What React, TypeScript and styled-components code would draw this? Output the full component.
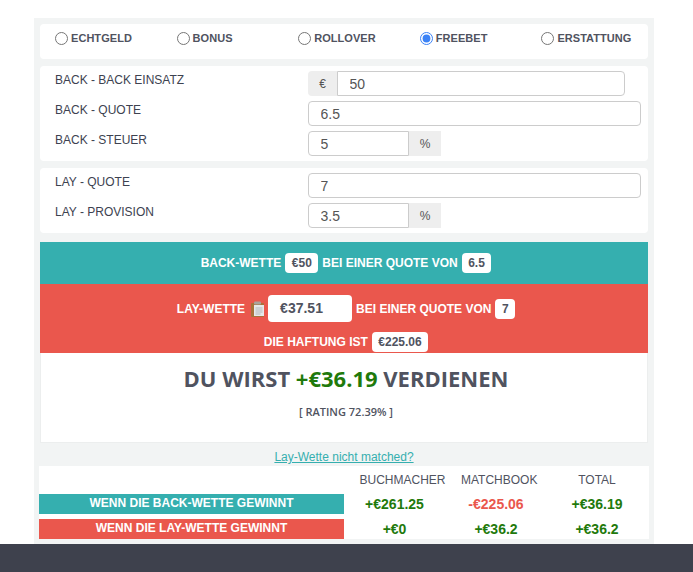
import React from 'react';
import styled, { createGlobalStyle } from 'styled-components';

const GlobalStyle = createGlobalStyle`
  html, body {
    margin: 0;
    padding: 0;
    background: #fff;
    font-family: 'Liberation Sans', Arial, sans-serif;
  }
  * { box-sizing: border-box; }
`;

const Page = styled.div`
  height: 572px;
  overflow: hidden;
  display: flex;
  flex-direction: column;
`;

const Main = styled.main`
  height: 544px;
  padding-top: 18px;
`;

const Footer = styled.footer`
  height: 28px;
  background: #3e414d;
`;

const Panel = styled.div`
  width: 620px;
  height: 526px;
  margin-left: 34px;
  padding: 6px 5px 0 5px;
  background: #f2f4f4;
`;

const Card = styled.div`
  margin: 0 1px 7px 1px;
  background: #fff;
  border-radius: 4px;
`;

const RadioCard = styled(Card)`
  display: grid;
  grid-template-columns: repeat(5, 1fr);
  height: 35px;
  padding-top: 7px;
`;

const RadioLabel = styled.label`
  display: flex;
  align-items: center;
  height: 14px;
  padding-left: 15px;
  font-size: 11px;
  font-weight: 700;
  letter-spacing: 0.05px;
  color: #50535f;
`;

const RadioInput = styled.input`
  width: 13px;
  height: 13px;
  margin: 0 3px 0 0;
  accent-color: #3b82f6;
`;

const FormCard = styled(Card)`
  padding: 5px 0 5px 15px;
  display: flex;
  flex-direction: column;
  gap: 5px;
`;

const FormRow = styled.div`
  display: grid;
  grid-template-columns: 253px 333px;
  height: 25px;
`;

const FieldLabel = styled.span`
  font-size: 12px;
  line-height: 18px;
  color: #3d4250;
`;

const InputGroup = styled.div<{ $width: number }>`
  display: flex;
  width: ${(p) => p.$width}px;
  height: 25px;
`;

const Addon = styled.span<{ $width: number; $side: 'left' | 'right' }>`
  width: ${(p) => p.$width}px;
  flex: none;
  text-align: center;
  font-size: 12px;
  line-height: 26px;
  color: #555;
  background: #eee;
  border-radius: ${(p) => (p.$side === 'left' ? '4px 0 0 4px' : '0')};
`;

const TextInput = styled.input<{ $flat?: 'left' | 'right' }>`
  flex: 1;
  min-width: 0;
  height: 25px;
  padding: 0 11.5px;
  font-family: inherit;
  font-size: 14px;
  color: #555;
  background: #fff;
  border: 1px solid #ccc;
  border-radius: ${(p) =>
    p.$flat === 'left' ? '0 4px 4px 0' : p.$flat === 'right' ? '4px 0 0 4px' : '4px'};
  outline: none;
`;

const Band = styled.div<{ $color: string; $height: number }>`
  margin: 9px 1px 0 1px;
  height: ${(p) => p.$height}px;
  padding-left: 4px;
  background: ${(p) => p.$color};
  color: #fff;
  font-size: 12px;
  font-weight: 700;
  text-align: center;
`;

const BackBand = styled(Band)`
  display: flex;
  align-items: center;
  justify-content: center;
  gap: 4px;
`;

const LayBand = styled(Band)`
  margin-top: 0;
  display: flex;
  flex-direction: column;
  align-items: center;
  padding-top: 11px;
  gap: 10px;
`;

const BandLine = styled.div<{ $height: number }>`
  display: flex;
  align-items: center;
  justify-content: center;
  gap: 4px;
  height: ${(p) => p.$height}px;
`;

const Pill = styled.span`
  display: inline-block;
  padding: 0 6.5px;
  height: 20px;
  line-height: 20px;
  color: #50535f;
  background: #fff;
  border-radius: 4px;
`;

const StakeBox = styled.span`
  display: inline-block;
  width: 84px;
  height: 27px;
  padding-left: 12px;
  line-height: 27px;
  font-size: 14px;
  text-align: left;
  color: #50535f;
  background: #fff;
  border-radius: 4px;
`;

const ClipIcon = styled.svg`
  width: 14px;
  height: 16px;
  margin-left: 2px;
  margin-right: -1px;
`;

const Result = styled.div`
  margin: 0 1px;
  height: 90px;
  padding: 10px 0 0 4px;
  text-align: center;
  background: #fff;
  border: 1px solid #eceeee;
  border-top: 0;
`;

const Headline = styled.div`
  font-family: 'Open Sans', sans-serif;
  font-size: 22px;
  font-weight: 700;
  line-height: 30px;
  color: #50535f;
`;

const Profit = styled.span`
  color: #1f7a0c;
`;

const Rating = styled.div`
  margin-top: 11px;
  font-family: 'Open Sans', sans-serif;
  font-size: 11px;
  font-weight: 600;
  color: #50535f;
`;

const LinkRow = styled.div`
  height: 23px;
  padding-top: 7px;
  text-align: center;
  font-size: 12px;
  line-height: 14px;
`;

const Link = styled.a`
  color: #35afaf;
  text-decoration: underline;
`;

const Summary = styled.div`
  display: grid;
  grid-template-columns: 305px 117px 76px 112px;
  grid-template-rows: 28px 25px 20px;
  height: 73px;
  background: #fff;
`;

const HeadCell = styled.div`
  padding-top: 7px;
  text-align: center;
  font-size: 12px;
  line-height: 14px;
  color: #50535f;
`;

const TotalHead = styled(HeadCell)`
  padding-left: 8px;
`;

const OutcomeLabel = styled.div<{ $color: string }>`
  height: 20px;
  line-height: 19px;
  text-align: center;
  font-size: 12px;
  font-weight: 700;
  color: #fff;
  background: ${(p) => p.$color};
`;

const columnPadding = {
  bookie: 'padding-right: 16px;',
  match: 'padding-right: 6px;',
  total: 'padding-left: 8px;',
};

const Amount = styled.div<{ $tone: 'win' | 'loss'; $col: keyof typeof columnPadding }>`
  height: 20px;
  line-height: 20px;
  text-align: center;
  white-space: nowrap;
  font-size: 14px;
  font-weight: 700;
  color: ${(p) => (p.$tone === 'win' ? '#1f7a0c' : '#ea574d')};
  ${(p) => columnPadding[p.$col]}
`;

const TEAL = '#35afaf';
const RED = '#ea574d';

const options = ['ECHTGELD', 'BONUS', 'ROLLOVER', 'FREEBET', 'ERSTATTUNG'];

export default function App() {
  const [mode, setMode] = React.useState('FREEBET');

  return (
    <Page>
      <GlobalStyle />
      <Main>
        <Panel>
          <RadioCard>
            {options.map((opt) => (
              <RadioLabel key={opt}>
                <RadioInput
                  type="radio"
                  name="mode"
                  checked={mode === opt}
                  onChange={() => setMode(opt)}
                />
                {opt}
              </RadioLabel>
            ))}
          </RadioCard>

          <FormCard>
            <FormRow>
              <FieldLabel>BACK - BACK EINSATZ</FieldLabel>
              <InputGroup $width={317}>
                <Addon $width={29} $side="left">€</Addon>
                <TextInput $flat="left" defaultValue="50" />
              </InputGroup>
            </FormRow>
            <FormRow>
              <FieldLabel>BACK - QUOTE</FieldLabel>
              <TextInput defaultValue="6.5" />
            </FormRow>
            <FormRow>
              <FieldLabel>BACK - STEUER</FieldLabel>
              <InputGroup $width={133}>
                <TextInput $flat="right" defaultValue="5" />
                <Addon $width={32} $side="right">%</Addon>
              </InputGroup>
            </FormRow>
          </FormCard>

          <FormCard>
            <FormRow>
              <FieldLabel>LAY - QUOTE</FieldLabel>
              <TextInput defaultValue="7" />
            </FormRow>
            <FormRow>
              <FieldLabel>LAY - PROVISION</FieldLabel>
              <InputGroup $width={133}>
                <TextInput $flat="right" defaultValue="3.5" />
                <Addon $width={32} $side="right">%</Addon>
              </InputGroup>
            </FormRow>
          </FormCard>

          <BackBand $color={TEAL} $height={42}>
            BACK-WETTE <Pill>€50</Pill> BEI EINER QUOTE VON <Pill>6.5</Pill>
          </BackBand>

          <LayBand $color={RED} $height={69}>
            <BandLine $height={27}>
              LAY-WETTE
              <ClipIcon viewBox="0 0 14 16">
                <rect x="0" y="2" width="13" height="14" rx="1" fill="#a9723a" />
                <rect x="3" y="4" width="10" height="11" fill="#e6e9ea" />
                <rect x="3" y="0.5" width="7" height="3" rx="1" fill="#a9a39b" />
                <path d="M4.5 7h7M4.5 9h7M4.5 11h7M4.5 13h5" stroke="#b3b8bb" strokeWidth="1" />
              </ClipIcon>
              <StakeBox>€37.51</StakeBox>
              BEI EINER QUOTE VON <Pill>7</Pill>
            </BandLine>
            <BandLine $height={20}>
              DIE HAFTUNG IST <Pill>€225.06</Pill>
            </BandLine>
          </LayBand>

          <Result>
            <Headline>
              DU WIRST <Profit>+€36.19</Profit> VERDIENEN
            </Headline>
            <Rating>[ RATING 72.39% ]</Rating>
          </Result>

          <LinkRow>
            <Link href="#">Lay-Wette nicht matched?</Link>
          </LinkRow>

          <Summary>
            <div />
            <HeadCell>BUCHMACHER</HeadCell>
            <HeadCell>MATCHBOOK</HeadCell>
            <TotalHead>TOTAL</TotalHead>

            <OutcomeLabel $color={TEAL}>WENN DIE BACK-WETTE GEWINNT</OutcomeLabel>
            <Amount $tone="win" $col="bookie">+€261.25</Amount>
            <Amount $tone="loss" $col="match">-€225.06</Amount>
            <Amount $tone="win" $col="total">+€36.19</Amount>

            <OutcomeLabel $color={RED}>WENN DIE LAY-WETTE GEWINNT</OutcomeLabel>
            <Amount $tone="win" $col="bookie">+€0</Amount>
            <Amount $tone="win" $col="match">+€36.2</Amount>
            <Amount $tone="win" $col="total">+€36.2</Amount>
          </Summary>
        </Panel>
      </Main>
      <Footer />
    </Page>
  );
}
